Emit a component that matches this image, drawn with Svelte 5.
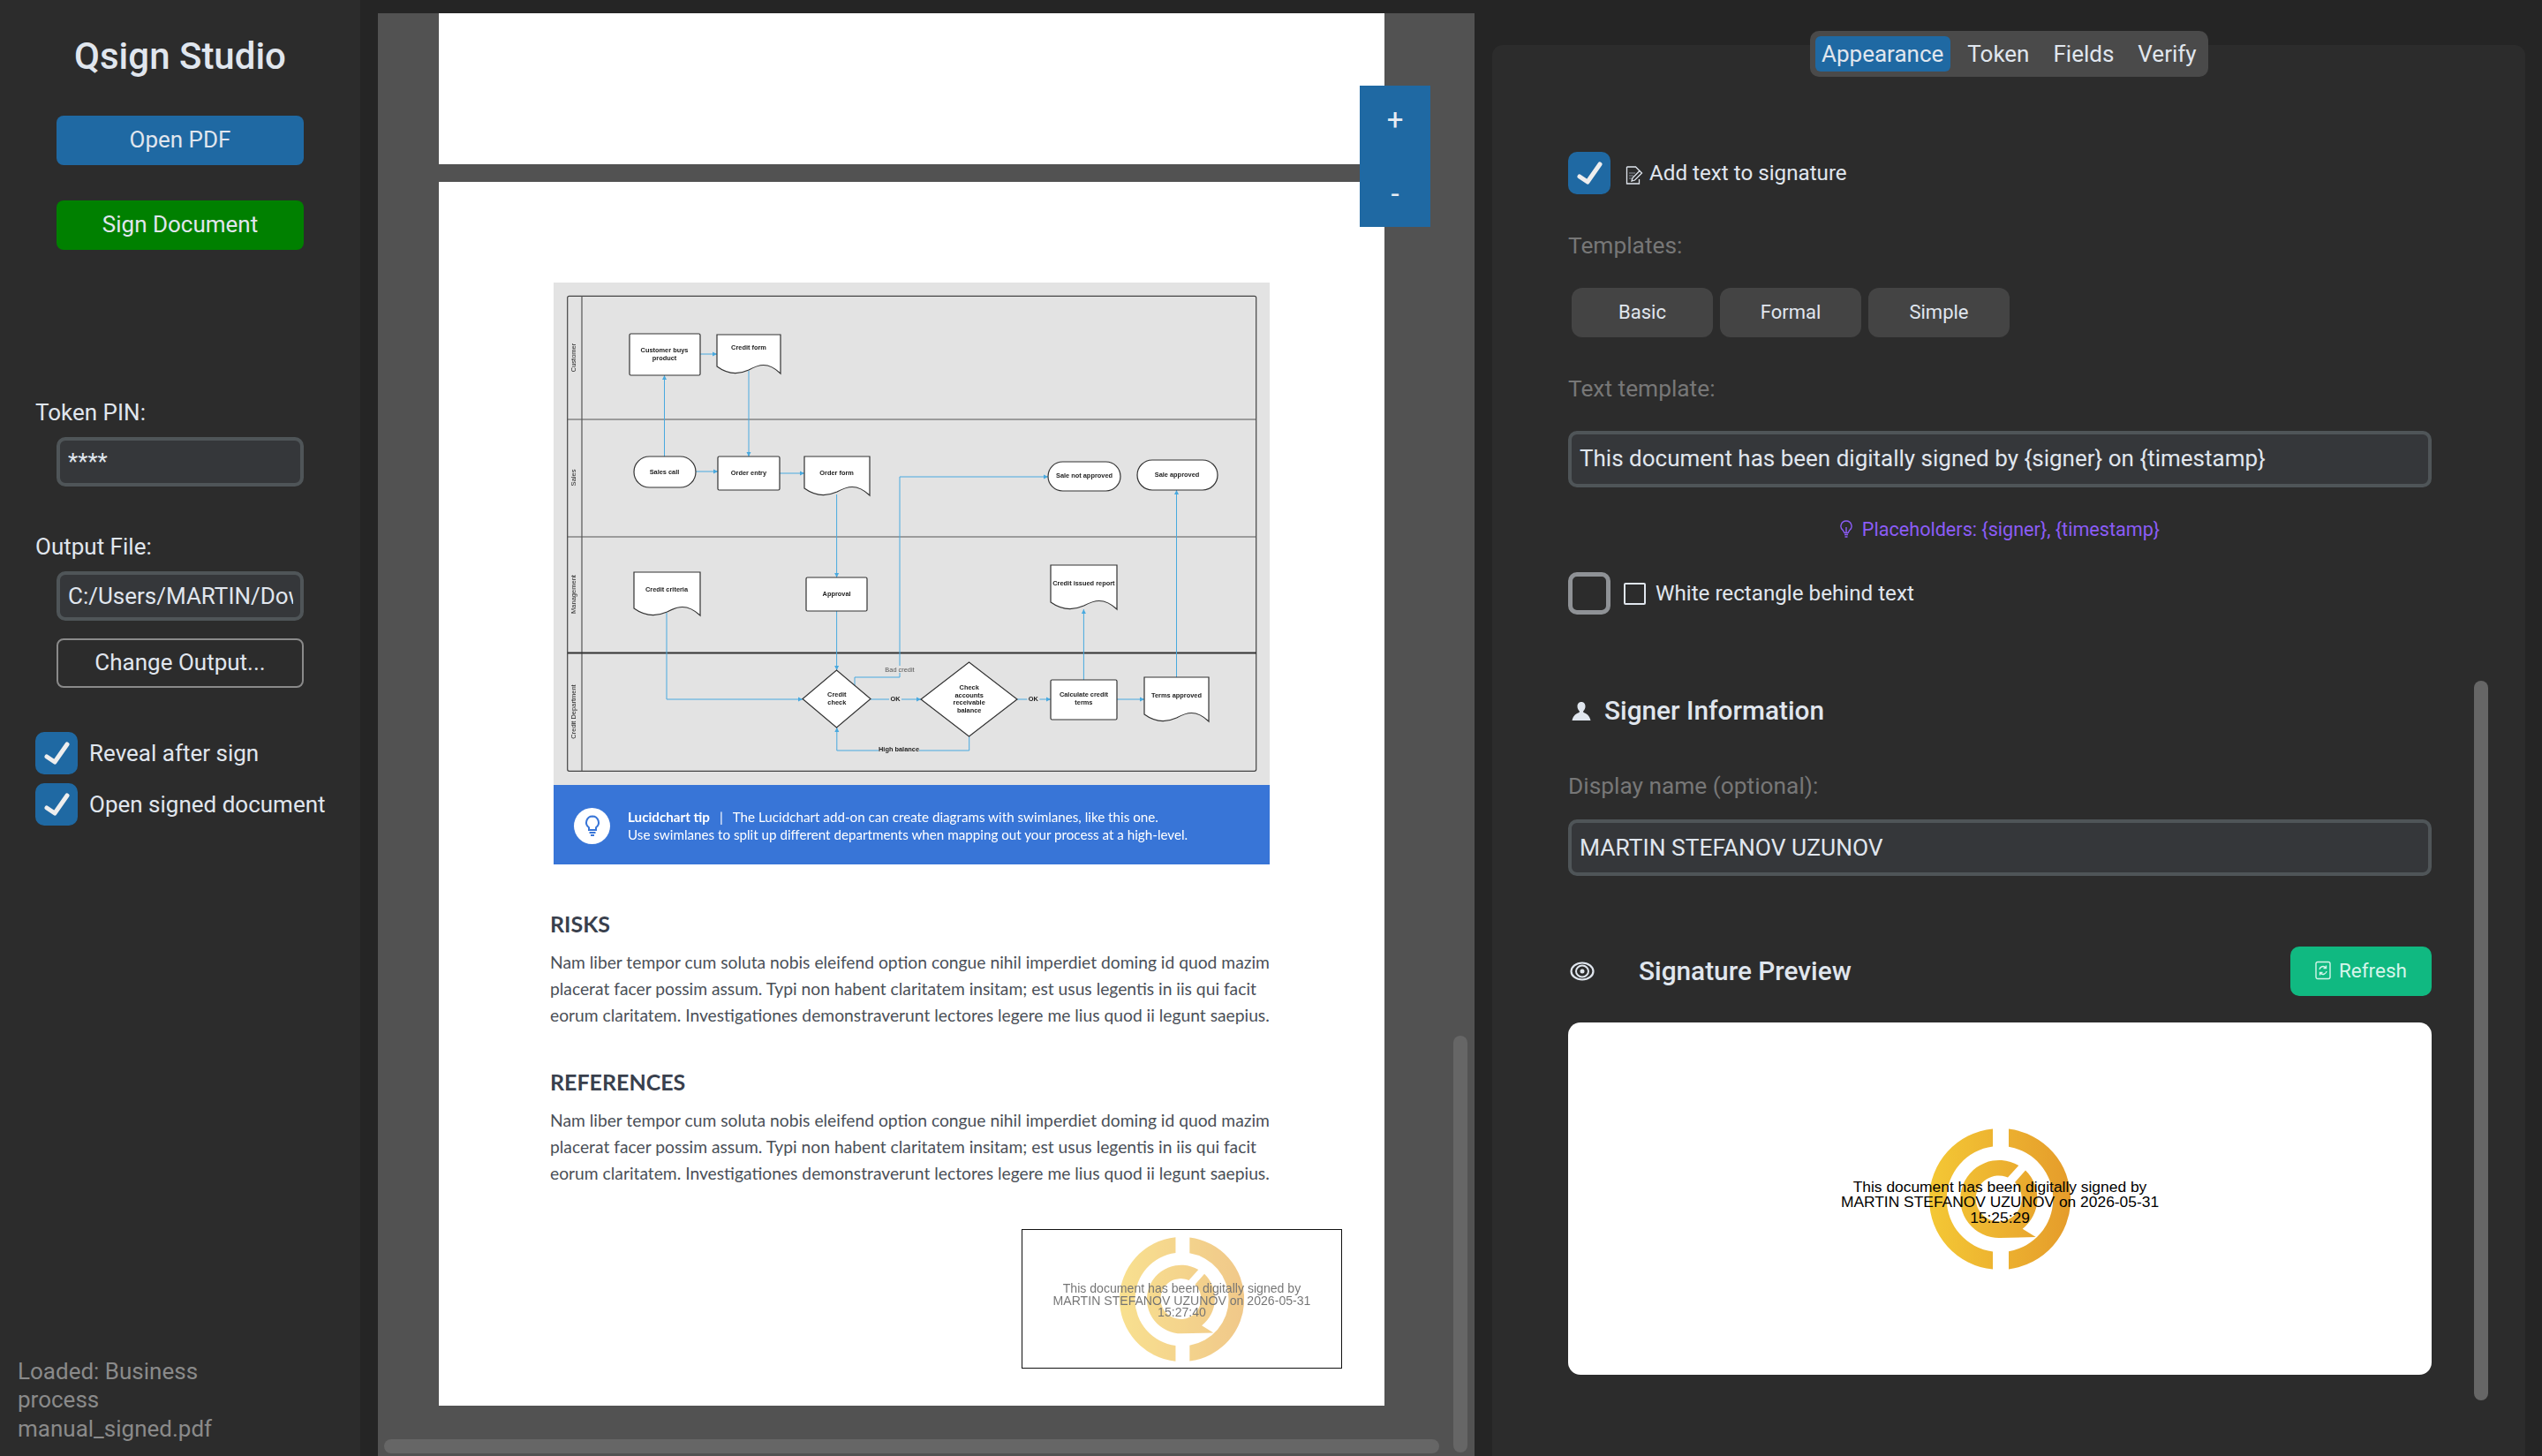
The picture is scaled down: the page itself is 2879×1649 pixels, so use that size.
<script lang="ts">
  const tabs = ['Appearance', 'Token', 'Fields', 'Verify'];
  const templates = ['Basic', 'Formal', 'Simple'];
  const outputPath = 'C:/Users/MARTIN/Downloads/Business process manual_signed.pdf';
  const loremLines = [
    'Nam liber tempor cum soluta nobis eleifend option congue nihil imperdiet doming id quod mazim',
    'placerat facer possim assum. Typi non habent claritatem insitam; est usus legentis in iis qui facit',
    'eorum claritatem. Investigationes demonstraverunt lectores legere me lius quod ii legunt saepius.'
  ];

  // swimlane diagram, in px of the diagram box
  const lanes = [
    { name: 'Customer', y: 85 },
    { name: 'Sales', y: 221 },
    { name: 'Management', y: 353 },
    { name: 'Credit Department', y: 486 }
  ];
  const rects = [
    { x: 86, y: 58, w: 80, h: 47 },
    { x: 186, y: 197, w: 70, h: 38 },
    { x: 286, y: 334, w: 69, h: 38 },
    { x: 563, y: 450, w: 75, h: 45 }
  ];
  const pills = [
    { x: 91, y: 197, w: 70, h: 35 },
    { x: 560, y: 203, w: 82, h: 33 },
    { x: 661, y: 201, w: 91, h: 34 }
  ];
  const docs = [
    { x: 185, y: 59, w: 72, h: 44 },
    { x: 284, y: 197, w: 74, h: 44 },
    { x: 91, y: 328, w: 75, h: 49 },
    { x: 563, y: 320, w: 75, h: 50 },
    { x: 669, y: 447, w: 73, h: 50 }
  ];
  const diamonds = [
    { x: 282, y: 439, w: 77, h: 65 },
    { x: 416, y: 430, w: 109, h: 84 }
  ];
  const wires = [
    '125.5 197 125.5 105', '166 81 185 81', '221 100 221 197', '160.5 214 186 214',
    '256 216 284 216', '320.6 240 320.6 334', '320.6 372 320.6 439',
    '128 374 128 472 282 472', '341 456 341 447 392 447 392 220 560 220',
    '359 472 416 472', '525 472 563 472', '638 472 669 472',
    '600.4 450 600.4 370', '705.5 447 705.5 235', '470.7 514 470.7 530 320.8 530 320.8 504'
  ];
  const labels = [
    { t: 'Customer buys', x: 125.5, y: 76 }, { t: 'product', x: 125.5, y: 85 },
    { t: 'Credit form', x: 221, y: 73 }, { t: 'Sales call', x: 125.5, y: 214 },
    { t: 'Order entry', x: 221, y: 215 }, { t: 'Order form', x: 320.6, y: 215 },
    { t: 'Sale not approved', x: 601, y: 218 }, { t: 'Sale approved', x: 706, y: 217 },
    { t: 'Credit criteria', x: 128, y: 347 }, { t: 'Approval', x: 320.6, y: 352 },
    { t: 'Credit issued report', x: 600.4, y: 340 },
    { t: 'Credit', x: 320.8, y: 466.5 }, { t: 'check', x: 320.8, y: 475.5 },
    { t: 'Check', x: 470.7, y: 458 }, { t: 'accounts', x: 470.7, y: 467 },
    { t: 'receivable', x: 470.7, y: 475.5 }, { t: 'balance', x: 470.7, y: 484.5 },
    { t: 'Calculate credit', x: 600.4, y: 466.5 }, { t: 'terms', x: 600.4, y: 475.5 },
    { t: 'Terms approved', x: 705.5, y: 467 }
  ];
  const gaps = [
    { t: 'OK', x: 387, y: 471, w: 14, bold: true }, { t: 'OK', x: 543.4, y: 471, w: 14, bold: true },
    { t: 'High balance', x: 391, y: 528.5, w: 46, bold: true }, { t: 'Bad credit', x: 392, y: 438, w: 36, bold: false }
  ];

  function docPath(d: { x: number; y: number; w: number; h: number }) {
    const b = d.y + d.h;
    return `M${d.x} ${d.y}H${d.x + d.w}V${b}C${d.x + d.w * 0.8} ${b - 14} ${d.x + d.w * 0.65} ${b - 10} ${d.x + d.w * 0.5} ${b - 4}C${d.x + d.w * 0.32} ${b + 2} ${d.x + d.w * 0.15} ${b} ${d.x} ${b - 8}Z`;
  }
</script>

{#snippet tick()}
  <span class="check on">
    <svg width="48" height="48" viewBox="0 0 48 48" aria-hidden="true">
      <path d="M13 28l9 6L36 14" fill="none" stroke="#eeeeee" stroke-width="5" stroke-linecap="round" stroke-linejoin="round"/>
    </svg>
  </span>
{/snippet}

{#snippet logo(id: string)}
  <svg class="logo" width="160" height="160" viewBox="0 0 160 160" aria-hidden="true">
    <defs>
      <linearGradient {id} x1="0" y1="0" x2="160" y2="0" gradientUnits="userSpaceOnUse">
        <stop offset="0" stop-color="#f4c835"/>
        <stop offset="1" stop-color="#e59c2b"/>
      </linearGradient>
    </defs>
    <g fill="url(#{id})">
      <path d="M72 .4A80 80 0 0 0 72 159.6V139.5A60 60 0 0 1 72 20.5Z"/>
      <path d="M90 .6A80 80 0 0 1 90 159.4V139.2A60 60 0 0 0 90 20.8Z"/>
      <path d="M101.3 42A44 44 0 1 0 80 124L120.7 123 105.7 113.7A44 44 0 0 0 109 47.5L97 61A26 26 0 1 1 89 55.6Z"/>
    </g>
  </svg>
{/snippet}

<div class="app">
  <aside class="sidebar">
    <h1>Qsign Studio</h1>
    <button class="btn blue open">Open PDF</button>
    <button class="btn green sign">Sign Document</button>

    <div class="side-label pin-label">Token PIN:</div>
    <input class="field side-field" type="text" value="****" readonly />

    <div class="side-label output-label">Output File:</div>
    <input class="field side-field" type="text" value={outputPath} readonly />
    <button class="btn outline">Change Output...</button>

    <div class="side-check first">{@render tick()}<span>Reveal after sign</span></div>
    <div class="side-check second">{@render tick()}<span>Open signed document</span></div>

    <div class="status">Loaded: Business process manual_signed.pdf</div>
  </aside>

  <main class="viewer">
    <div class="page first-page"></div>
    <div class="page second-page">
      <div class="figure">
        <svg class="diagram" width="811" height="569" viewBox="0 0 811 569" role="img" aria-label="Swimlane diagram">
          <rect width="811" height="569" fill="#e3e3e3"/>
          <rect x="15.7" y="15.3" width="780" height="538" rx="2" fill="none" stroke="#444" stroke-width="1.2"/>
          <path d="M32 15V553M16 155H796M16 288H796" fill="none" stroke="#555" stroke-width="1.2"/>
          <path d="M16 419.5H796" stroke="#333" stroke-width="2"/>
          {#each lanes as lane}
            <text class="lane" transform="translate(25 {lane.y}) rotate(-90)">{lane.name}</text>
          {/each}
          {#each wires as pts}
            <polyline points={pts} fill="none" stroke="#48a9df" stroke-width="1"/>
          {/each}
          <g fill="#48a9df">
            <path d="M125.5 105l-2.500 5h5z"/><path d="M185 81l-5-2.500v5z"/><path d="M221 197l-2.500-5h5z"/>
            <path d="M186 214l-5-2.500v5z"/><path d="M284 216l-5-2.500v5z"/><path d="M320.600 334l-2.500-5h5z"/>
            <path d="M320.600 439l-2.500-5h5z"/><path d="M282 472l-5-2.500v5z"/><path d="M560 220l-5-2.500v5z"/>
            <path d="M416 472l-5-2.500v5z"/><path d="M563 472l-5-2.500v5z"/><path d="M669 472l-5-2.500v5z"/>
            <path d="M600.400 370l-2.500 5h5z"/><path d="M705.500 235l-2.500 5h5z"/><path d="M320.800 504l-2.500 5h5z"/>
          </g>
          <g fill="#fff" stroke="#333" stroke-width="1.200">
            {#each rects as r}<rect x={r.x} y={r.y} width={r.w} height={r.h} rx="1.500"/>{/each}
            {#each pills as p}<rect x={p.x} y={p.y} width={p.w} height={p.h} rx={p.h / 2}/>{/each}
            {#each docs as d}<path d={docPath(d)}/>{/each}
            {#each diamonds as d}
              <path d="M{d.x + d.w / 2} {d.y}L{d.x + d.w} {d.y + d.h / 2}L{d.x + d.w / 2} {d.y + d.h}L{d.x} {d.y + d.h / 2}Z"/>
            {/each}
          </g>
          {#each gaps as g}
            <rect x={g.x - g.w / 2} y={g.y - 4} width={g.w} height="8" fill="#e3e3e3"/>
            <text class="node" class:thin={!g.bold} x={g.x} y={g.y}>{g.t}</text>
          {/each}
          {#each labels as l}
            <text class="node" x={l.x} y={l.y}>{l.t}</text>
          {/each}
        </svg>
        <div class="tip">
          <span class="tip-icon">
            <svg width="20" height="26" viewBox="0 0 20 26" aria-hidden="true">
              <path d="M10 2.500a7 7 0 0 0-4 12.700V18h8v-2.800a7 7 0 0 0-4-12.700z" fill="none" stroke="#3875d7" stroke-width="2"/>
              <path d="M6.500 21h7M8 24h4" stroke="#3875d7" stroke-width="2"/>
            </svg>
          </span>
          <div class="tip-text">
            <div><b>Lucidchart tip</b><span class="pipe">|</span>The Lucidchart add-on can create diagrams with swimlanes, like this one.</div>
            <div>Use swimlanes to split up different departments when mapping out your process at a high-level.</div>
          </div>
        </div>
      </div>

      <h3 class="risks">RISKS</h3>
      <p class="risks-text">{#each loremLines as line}<span>{line}</span>{/each}</p>
      <h3 class="refs">REFERENCES</h3>
      <p>{#each loremLines as line}<span>{line}</span>{/each}</p>

      <div class="stamp">
        <div class="stack">
          {@render logo('grad-stamp')}
          <div class="stamp-text">This document has been digitally signed by<br />MARTIN STEFANOV UZUNOV on 2026-05-31<br />15:27:40</div>
        </div>
      </div>
    </div>

    <div class="zoom-box">
      <span>+</span>
      <span>-</span>
    </div>
    <div class="bar horizontal"></div>
    <div class="bar vertical"></div>
  </main>

  <section class="right">
    <nav class="tabs">
      {#each tabs as tab, i}
        <span class="tab" class:active={i === 0}>{tab}</span>
      {/each}
    </nav>

    <div class="panel">
      <div class="row">
        {@render tick()}
        <svg class="memo" width="20" height="21" viewBox="0 0 20 21" aria-hidden="true">
          <path d="M1.500 1h10l4 4v3M15.500 15v5h-14V1" fill="none" stroke="#e0e6ee" stroke-width="1.300"/>
          <path d="M4 8h7M4 11h5M4 14h3" stroke="#8b929b" stroke-width="1.200"/>
          <path d="M7 17l1-3.500 8-8 2.500 2.500-8 8z" fill="#2c2c2c" stroke="#e0e6ee" stroke-width="1.300"/>
        </svg>
        <span class="row-text">Add text to signature</span>
      </div>

      <div class="muted templates-label">Templates:</div>
      <div class="template-row">
        {#each templates as t}
          <button class="template">{t}</button>
        {/each}
      </div>

      <div class="muted template-text-label">Text template:</div>
      <input class="field wide" type="text" value="This document has been digitally signed by {'{signer}'} on {'{timestamp}'}" readonly />

      <div class="hint">
        <svg width="14" height="20" viewBox="0 0 14 20" aria-hidden="true">
          <path d="M7 1a6 6 0 0 0-3.500 10.900L5 14.500h4l1.500-2.600A6 6 0 0 0 7 1z" fill="none" stroke="#8b5cf6" stroke-width="1.400"/>
          <path d="M5 16.500h4M5.500 19h3M7 14V8" stroke="#8b5cf6" stroke-width="1.400"/>
        </svg>
        <span>Placeholders: {'{signer}'}, {'{timestamp}'}</span>
      </div>

      <div class="row rect-row">
        <span class="check"></span>
        <span class="glyph-box"></span>
        <span class="row-text">White rectangle behind text</span>
      </div>

      <h2 class="section signer">
        <svg width="22" height="21" viewBox="0 0 22 21" aria-hidden="true">
          <path d="M11 0c3 0 4.500 2.300 4.500 5 0 2.300-1 4.200-2.200 5.300-.4.400-.3 1.300.4 1.700 2.800 1.300 6.300 2.700 7.800 9H.500c1.500-6.300 5-7.700 7.800-9 .7-.4.800-1.300.4-1.700C7.500 9.200 6.500 7.300 6.500 5 6.500 2.300 8 0 11 0z" fill="#e0e6ee"/>
        </svg>
        Signer Information
      </h2>

      <div class="muted name-label">Display name (optional):</div>
      <input class="field wide name-field" type="text" value="MARTIN STEFANOV UZUNOV" readonly />

      <div class="preview-head">
        <h2 class="section">
          <svg class="eye" width="28" height="22" viewBox="0 0 28 22" aria-hidden="true">
            <ellipse cx="14" cy="11" rx="12.500" ry="9.500" fill="none" stroke="#e0e6ee" stroke-width="2.200"/>
            <ellipse cx="14" cy="11" rx="7" ry="6.500" fill="none" stroke="#e0e6ee" stroke-width="2"/>
            <circle cx="14" cy="11" r="2.500" fill="#e0e6ee"/>
          </svg>
          Signature Preview
        </h2>
        <button class="refresh">
          <svg width="18" height="22" viewBox="0 0 18 22" aria-hidden="true">
            <rect x="1" y="1.500" width="16" height="19" rx="2" fill="none" stroke="#d6f5ea" stroke-width="1.400"/>
            <path d="M5 10a4 4 0 0 1 7-2M13 12a4 4 0 0 1-7 2M12.500 5.500V8.500H9.500M5.500 16.500V13.500H8.500" fill="none" stroke="#d6f5ea" stroke-width="1.400"/>
          </svg>
          Refresh
        </button>
      </div>

      <div class="preview">
        <div class="stack">
          {@render logo('grad-preview')}
          <div class="preview-text">This document has been digitally signed by<br />MARTIN STEFANOV UZUNOV on 2026-05-31<br />15:25:29</div>
        </div>
      </div>

      <div class="bar panel-bar"></div>
    </div>
  </section>
</div>

<style>
  :global(body) {
    margin: 0;
    background: #252525;
  }

  .app {
    display: flex;
    width: 2879px;
    height: 1649px;
    overflow: hidden;
    background: #252525;
    color: #e0e6ee;
    font-family: Roboto, sans-serif;
    font-size: 26px;
  }

  button {
    font-family: inherit;
    padding: 0 0 2px;
    border: none;
    display: block;
  }

  /* sidebar */
  .sidebar {
    width: 408px;
    flex-shrink: 0;
    box-sizing: border-box;
    background: #2c2c2c;
    padding-top: 38px;
    display: flex;
    flex-direction: column;
    height: 100%;
  }

  h1 {
    margin: 0;
    font-size: 42px;
    line-height: 52px;
    font-weight: 500;
    text-align: center;
  }

  .btn {
    width: 280px;
    height: 56px;
    margin-left: 64px;
    border-radius: 8px;
    color: #e0e6ee;
    font-size: 26px;
    box-sizing: border-box;
  }

  .blue { background: #1f69a3; }
  .green { background: #008000; }
  .open { margin-top: 41px; }
  .sign { margin-top: 40px; }

  .outline {
    margin-top: 20px;
    background: transparent;
    border: 2px solid #8a8a8a;
  }

  .side-label {
    margin-left: 40px;
    line-height: 32px;
  }

  .pin-label { margin-top: 168px; margin-bottom: 12px; }
  .output-label { margin-top: 52px; margin-bottom: 12px; }

  .field {
    display: block;
    box-sizing: border-box;
    background: #35373a;
    border: 4px solid #4f5558;
    border-radius: 10px;
    color: #e0e6ee;
    font-family: inherit;
    font-size: 26px;
    outline: none;
    padding: 0 8px 0 9px;
  }

  .side-field {
    width: 280px;
    height: 56px;
    margin-left: 64px;
  }

  .side-check {
    display: flex;
    align-items: center;
    gap: 13px;
    margin-left: 40px;
  }

  .side-check.first { margin-top: 50px; }
  .side-check.second { margin-top: 10px; }

  .check {
    display: block;
    width: 48px;
    height: 48px;
    box-sizing: border-box;
    border-radius: 10px;
    flex-shrink: 0;
    border: 5px solid #8f9296;
  }

  .check.on {
    background: #1f69a3;
    border: none;
  }

  .check svg { display: block; }

  .status {
    margin-top: auto;
    margin-left: 20px;
    padding-bottom: 15px;
    width: 260px;
    color: #8a8a8a;
    line-height: 32.500px;
  }

  /* pdf viewer */
  .viewer {
    position: relative;
    width: 1242px;
    margin-left: 20px;
    margin-top: 15px;
    flex-shrink: 0;
    background: #525252;
    overflow: hidden;
  }

  .page {
    width: 1071px;
    margin-left: 69px;
    background: #fff;
  }

  .first-page { height: 171px; }

  .second-page {
    margin-top: 20px;
    height: 1386px;
    box-sizing: border-box;
    padding: 114px 0 0 126px;
    color: #4a4f57;
    font-family: Lato, sans-serif;
  }

  .figure {
    width: 811px;
    margin-left: 4px;
    filter: blur(0.35px);
  }

  .diagram { display: block; }

  .lane {
    font-family: "Liberation Sans", sans-serif;
    font-size: 7.500px;
    text-anchor: middle;
    fill: #222;
  }

  .node {
    font-family: "Liberation Sans", sans-serif;
    font-size: 7.400px;
    font-weight: 700;
    text-anchor: middle;
    dominant-baseline: central;
    fill: #222;
  }

  .node.thin {
    font-weight: 400;
    fill: #555;
  }

  .tip {
    height: 90px;
    box-sizing: border-box;
    padding: 2px 0 0 23px;
    background: #3875d7;
    color: #fff;
    display: flex;
    align-items: center;
    gap: 20px;
    font-family: Lato, sans-serif;
    font-size: 15.200px;
    line-height: 20px;
  }

  .tip-icon {
    width: 41px;
    height: 41px;
    border-radius: 50%;
    background: #fff;
    display: flex;
    align-items: center;
    justify-content: center;
    flex-shrink: 0;
  }

  .pipe { margin: 0 11px; }

  h3 {
    margin: 0;
    font-size: 25px;
    line-height: 30px;
    font-weight: 700;
    color: #39404d;
  }

  .risks { margin-top: 52px; }
  .refs { margin-top: 45px; }

  p {
    margin: 14px 0 0;
    font-size: 19.250px;
    line-height: 30px;
    white-space: nowrap;
  }

  p span { display: block; }

  .stamp {
    width: 363px;
    height: 158px;
    box-sizing: border-box;
    margin: 48px 0 0 534px;
    border: 1px solid #111;
    display: flex;
    align-items: center;
    justify-content: center;
  }

  .stack {
    display: grid;
    place-items: center;
  }

  .stack > :global(*) { grid-area: 1 / 1; }

  .stamp .stack { opacity: 0.55; }

  .stamp :global(.logo) {
    width: 141px;
    height: 141px;
  }

  .stamp-text,
  .preview-text {
    font-family: "Liberation Sans", sans-serif;
    color: #000;
    text-align: center;
    white-space: nowrap;
  }

  .stamp-text {
    margin-top: 5px;
    font-size: 14.100px;
    line-height: 13.600px;
  }

  .preview-text {
    margin-top: 9px;
    font-size: 17.400px;
    line-height: 17.300px;
  }

  .zoom-box {
    position: absolute;
    left: 1112px;
    top: 82px;
    width: 80px;
    height: 160px;
    box-sizing: border-box;
    padding: 21.500px 0;
    background: #1f69a3;
    display: flex;
    flex-direction: column;
    align-items: center;
    justify-content: space-between;
    font-size: 33px;
    line-height: 1;
    color: #e6ecf3;
  }

  .bar {
    position: absolute;
    background: #666;
    border-radius: 8px;
  }

  .horizontal {
    left: 7px;
    top: 1615px;
    width: 1195px;
    height: 16px;
  }

  .vertical {
    left: 1218px;
    top: 1158px;
    width: 16px;
    height: 472px;
  }

  /* right column */
  .right {
    width: 1170px;
    margin-left: 20px;
    flex-shrink: 0;
    display: flex;
    flex-direction: column;
    align-items: center;
  }

  .tabs {
    position: relative;
    z-index: 1;
    margin-top: 35px;
    height: 52px;
    box-sizing: border-box;
    width: 451px;
    padding: 6px;
    display: flex;
    gap: 12px;
    background: #4a4a4a;
    border-radius: 10px;
  }

  .tab {
    padding: 0 7.500px;
    line-height: 40px;
    border-radius: 6px;
    color: #e0e6ee;
  }

  .tab.active { background: #1f69a3; }

  .panel {
    position: relative;
    align-self: stretch;
    flex: 1;
    margin-top: -36px;
    padding: 121px 106px 0 86px;
    background: #2c2c2c;
    border-radius: 12px 12px 0 0;
  }

  .row {
    display: flex;
    align-items: center;
    height: 48px;
  }

  .memo { margin: 4px 7px 0 17px; }

  .row-text { font-size: 24.200px; }

  .muted {
    color: #777;
    line-height: 32px;
    font-size: 26.300px;
  }

  .templates-label { margin-top: 42px; }

  .template-row {
    display: flex;
    gap: 8px;
    margin: 32px 0 0 4px;
  }

  .template {
    width: 160px;
    height: 56px;
    background: #444;
    border-radius: 12px;
    color: #e0e6ee;
    font-size: 22px;
  }

  .template-text-label { margin-top: 42px; }

  .wide {
    width: 978px;
    height: 64px;
    margin-top: 32px;
    padding-left: 9px;
    padding-bottom: 2px;
  }

  .hint {
    margin-top: 32px;
    height: 30px;
    padding-bottom: 2px;
    display: flex;
    align-items: center;
    justify-content: center;
    gap: 11px;
    color: #8b5cf6;
    font-size: 21.600px;
  }

  .rect-row { margin-top: 32px; }

  .glyph-box {
    width: 25px;
    height: 25px;
    box-sizing: border-box;
    border: 2px solid #e0e6ee;
    border-radius: 2px;
    margin: 0 11px 0 15px;
  }

  .section {
    margin: 0;
    font-size: 29.800px;
    line-height: 36px;
    font-weight: 500;
    display: flex;
    align-items: center;
  }

  .signer {
    margin-top: 91px;
    padding-left: 4px;
    gap: 15px;
  }

  .name-label { margin-top: 51px; }
  .name-field { margin-top: 22px; font-size: 26.400px; padding-bottom: 0; }

  .preview-head {
    margin-top: 80px;
    height: 56px;
    display: flex;
    align-items: center;
    justify-content: space-between;
  }

  .eye { margin: 0 50px 0 2px; }

  .refresh {
    width: 160px;
    height: 56px;
    background: #10b981;
    border-radius: 10px;
    color: #d6f5ea;
    font-size: 22.500px;
    display: flex;
    align-items: center;
    justify-content: center;
    gap: 9px;
  }

  .preview {
    margin-top: 30px;
    height: 399px;
    background: #fff;
    border-radius: 14px;
    display: flex;
    align-items: center;
    justify-content: center;
  }

  .panel-bar {
    left: 1112px;
    top: 720px;
    width: 16px;
    height: 815px;
  }
</style>
